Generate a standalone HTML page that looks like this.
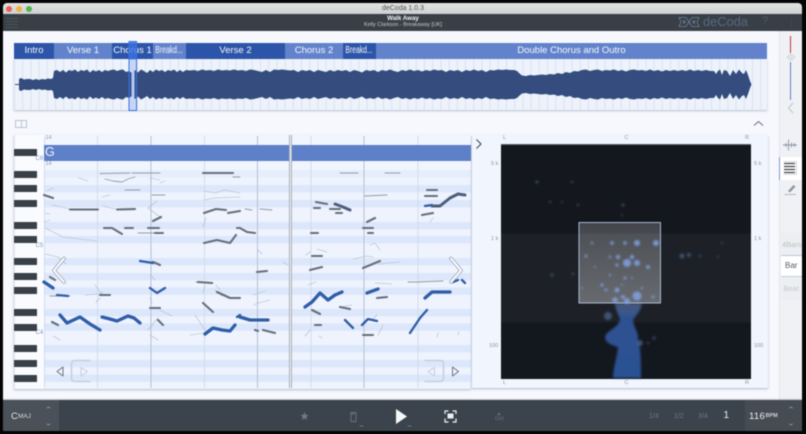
<!DOCTYPE html>
<html><head><meta charset="utf-8">
<style>
html,body{margin:0;padding:0;background:#000;width:806px;height:434px;overflow:hidden}
*{box-sizing:border-box}
#w{position:absolute;left:0;top:0;width:806px;height:434px;overflow:hidden;filter:blur(.55px);font-family:"Liberation Sans",sans-serif;background:#050505}
#w div,#w svg{position:absolute}
.s{top:42.5px;height:16.5px;color:#f4f7fd;font-size:9.5px;line-height:16.5px;text-align:center;white-space:nowrap}
.d{background:#2c54a8}.l{background:#6283cc}
.k{left:14px;width:22.5px;background:#3a4048;height:7px;border-radius:.5px}
.t{white-space:nowrap;line-height:1}
.lab{color:#8995aa;font-size:5.5px;white-space:nowrap;line-height:1}
.b{display:inline-block;transform:scaleX(.68);transform-origin:center;margin:0 -8px;font-size:10px}
</style></head><body>
<div id="w">
<!-- window -->
<div style="left:3px;top:3px;width:799px;height:11px;background:linear-gradient(#e4e4e4,#cfcfcf);border-radius:4px 4px 0 0"></div>
<div style="left:6px;top:5.8px;width:6px;height:6px;border-radius:50%;background:#ec5f58"></div>
<div style="left:16px;top:5.8px;width:6px;height:6px;border-radius:50%;background:#eeb340"></div>
<div style="left:26px;top:5.8px;width:6px;height:6px;border-radius:50%;background:#4fb84d"></div>
<div class="t" style="left:303px;width:200px;top:5px;text-align:center;font-size:7px;color:#555">deCoda 1.0.3</div>
<!-- header -->
<div style="left:3px;top:14px;width:799px;height:17px;background:#383f46"></div>
<div style="left:6px;top:17.5px;width:12px;height:1px;background:#4b535b;box-shadow:0 3px 0 #4b535b,0 6px 0 #4b535b,0 9px 0 #4b535b"></div>
<div class="t" style="left:303px;width:200px;top:16px;text-align:center;font-size:6.2px;font-weight:bold;color:#f0f2f4">Walk Away</div>
<div class="t" style="left:303px;width:200px;top:23px;text-align:center;font-size:5.4px;color:#c3c9cf">Kelly Clarkson - Breakaway [UK]</div>
<svg style="left:678px;top:16px" width="22" height="12" viewBox="0 0 22 12" fill="none" stroke="#6f819d" stroke-width=".8"><path d="M1 1.5H8L11 6L8 10.5H1L3 6Z"/><path d="M21 1.5H14L11 6L14 10.5H21L19 6Z"/><path d="M5.5 4.5V7.5L7.5 6Z M16.5 4.5V7.5L14.5 6Z"/></svg>
<div class="t" style="left:703px;top:16px;font-size:12.8px;color:#586981">deCoda</div>
<div class="t" style="left:762px;top:16px;font-size:11px;color:#4d5a6a">?</div>
<div style="left:790.5px;top:18.5px;width:1px;height:1.5px;background:#4d5a6a;box-shadow:0 3px 0 #4d5a6a,0 6px 0 #4d5a6a"></div>
<!-- content -->
<div style="left:3px;top:31px;width:799px;height:369px;background:#f6f8fd"></div>
<!-- sections -->
<div style="left:14px;top:59px;width:753px;height:51px;background:#edf2fb;box-shadow:0 1px 2px rgba(90,105,135,.4)"></div>
<svg style="left:14px;top:59px" width="753" height="51"><defs><pattern id="tk" width="8.2" height="51" patternUnits="userSpaceOnUse"><rect width="1" height="51" fill="#dbe3f2"/></pattern></defs><rect width="753" height="51" fill="url(#tk)"/></svg>
<div class="s d" style="left:14px;width:40px">Intro</div>
<div class="s l" style="left:54px;width:58px">Verse 1</div>
<div class="s d" style="left:112px;width:41px">Chorus 1</div>
<div class="s l" style="left:153px;width:33px"><span class="b">Breakd...</span></div>
<div class="s d" style="left:186px;width:99px">Verse 2</div>
<div class="s l" style="left:285px;width:58px">Chorus 2</div>
<div class="s d" style="left:343px;width:33px"><span class="b">Breakd...</span></div>
<div class="s l" style="left:376px;width:391px">Double Chorus and Outro</div>
<!-- waveform -->
<svg style="left:0;top:0" width="806" height="434">
<defs><g id="wf"><polygon points="15,84.5 15,84 19,84 19,79 21,78 24,79.5 27,79 30,79 33,80 36,79 39,80 42,79 45,79.5 48,78.5 51,79 53,78 54,71 57,70 60,72 63,70 66,72.5 69,70 72,71 75,69.5 78,72 81,70 84,71 87,69.5 90,72.5 93,70 96,71.5 99,70 102,72 105,70 108,71 111,70 114,69.5 117,71 120,70 123,69.5 126,72 129,71 132,73 135,70 138,72.5 141,69.5 144,71 147,73 150,70 153,72 156,69.5 159,71 162,70 165,72 168,70 171,71 174,69.5 177,72 180,70 183,72 186,70 190,70.5 194,70 198,71 202,69.5 206,70.5 210,70 214,71 218,69.5 222,70.5 226,70 230,70.5 234,69.5 238,70.5 242,70 246,71 250,69.5 254,70 258,71 262,72 266,70 270,72 274,69.5 278,70 282,69.5 286,70 290,70.5 294,70 298,72 302,70 306,71 310,70 314,72 318,70 322,71 326,72 330,70 334,71.5 338,70 342,71 346,70 350,72 354,70 358,71 362,72.5 366,70 370,71 374,70 378,72 382,70 386,71 390,69.5 394,71 398,72 402,70 406,71 410,69.5 414,71 418,70 422,71.5 426,70 430,71 434,69.5 438,70.5 442,70 446,72 450,70 454,71 458,70 462,72 466,70 470,71 474,69.5 478,71 482,70 486,72 490,70 494,70.5 498,69.5 502,70 506,69.5 510,70 514,70 517,71 519,73 522,75.5 526,76 530,75 534,75.5 538,75 542,74.5 546,75 550,74 554,74.5 558,73 562,74 566,72 570,73 574,71 578,71.5 582,70 586,69.5 590,71 594,70 598,69.5 602,71 606,70 610,70.5 614,69.5 618,71 622,70 626,71.5 630,70 634,69.5 638,70.5 642,70 646,71 650,69.5 654,71 658,70 662,71.5 666,70 670,71 674,70 678,71 682,70 686,71 690,69.5 694,71 698,70 702,71 706,70 710,71 714,71 716,74 718,71 720,69.5 722,75 724,70 727,71 730,76 733,70 736,74 739,69.5 742,73 744,74 746,70 748,75 750,81 751.5,84.5"/></g></defs>
<use href="#wf" fill="#344c7e"/>
<use href="#wf" fill="#344c7e" transform="translate(0,169) scale(1,-1)"/>
<rect x="131.5" y="60" width="3" height="50" fill="#e6eefc" opacity=".9"/>
<rect x="129" y="41.5" width="7.5" height="18" fill="#3b72e0" fill-opacity=".75"/>
<rect x="129" y="41.5" width="7.5" height="69" fill="#3b72e0" fill-opacity=".2" stroke="#3b72e0" stroke-width="1"/>
</svg>
<!-- collapse icons -->
<div style="left:15px;top:119.5px;width:11.5px;height:8px;border:1px solid #b9c3d4"><div style="left:5px;top:0;width:1px;height:6px;background:#b9c3d4"></div></div>
<svg style="left:752px;top:119px" width="13" height="8" fill="none" stroke="#666f7b" stroke-width="1"><path d="M2 6.5L6.5 2.5L11 6.5"/></svg>
<!-- piano panel -->
<div style="left:14px;top:135px;width:457px;height:253.5px;background:#f1f5fd;box-shadow:0 1px 2px rgba(90,105,135,.45)"></div>
<div style="left:14px;top:135px;width:30px;height:253.5px;background:#fafbfe;border-left:1px solid #e3e7ef"></div>
<div style="left:44px;top:170px;width:427px;height:218px;background:#eef3fd"></div>
<svg style="left:0;top:0" width="806" height="434" fill="#dce7fb">
<rect x="44" y="170" width="427" height="7.5" fill="#e6eefc"/>
<rect x="44" y="185" width="427" height="7.3"/><rect x="44" y="200" width="427" height="7.3"/>
<rect x="44" y="222" width="427" height="7.3"/><rect x="44" y="236" width="427" height="7.3"/>
<rect x="44" y="258" width="427" height="7.3"/><rect x="44" y="273" width="427" height="7.3"/>
<rect x="44" y="287.5" width="427" height="7.3"/><rect x="44" y="309" width="427" height="7.3"/>
<rect x="44" y="323.5" width="427" height="7.3"/><rect x="44" y="345" width="427" height="7.3"/>
<rect x="44" y="360" width="427" height="7.3"/><rect x="44" y="374.5" width="427" height="7.3"/>
<path d="M44.5 136V388M97.5 136V388M204.5 136V388M311 136V388M418 136V388" stroke="#cdd7e8" stroke-width=".8"/>
<path d="M151 136V388M257.5 136V388M364 136V388" stroke="#b3c1d8" stroke-width="1"/>
</svg>
<!-- chord bar -->
<div style="left:44px;top:144.5px;width:427px;height:16px;background:#5e80c8"></div>
<div class="t" style="left:45px;top:146px;font-size:12.5px;color:#f2f5fc">G</div>
<div class="lab" style="left:45.5px;top:135.5px;color:#8d98ac">14</div>
<div class="lab" style="left:45.5px;top:162px;color:#8d98ac">14</div>
<div class="lab" style="left:35.5px;top:155.5px;color:#7f98cb;font-size:6px">C6</div>
<div class="lab" style="left:35.5px;top:243px;color:#7f98cb;font-size:6px">C5</div>
<div class="lab" style="left:35.5px;top:330px;color:#7f98cb;font-size:6px">C4</div>
<!-- black keys -->
<div class="k" style="top:148.8px"></div><div class="k" style="top:170.8px"></div><div class="k" style="top:185.3px"></div><div class="k" style="top:199.8px"></div><div class="k" style="top:221.8px"></div><div class="k" style="top:236px"></div><div class="k" style="top:258.3px"></div><div class="k" style="top:272.8px"></div><div class="k" style="top:287.3px"></div><div class="k" style="top:309px"></div><div class="k" style="top:323.5px"></div><div class="k" style="top:345.3px"></div><div class="k" style="top:360px"></div><div class="k" style="top:374.5px"></div>
<!-- notes -->
<svg style="left:0;top:0" width="806" height="434" fill="none" stroke-linecap="round" stroke-linejoin="round">
<g stroke="#aeb8c6" stroke-width=".6">
<path d="M78 177.5L88 181M47 191L53 188M102 197L110 195M52 205L70 209M103 206L115 209M148 208L157 201M148 208L160 217M204 191L215 193L225 190L240 193M204 200L215 198L240 197M45 228L63 237L97 241M45 254L58 257L66 264M45 213L50 214M44 222L50 220M203 227L206 218M160 183L165 181M150 178L160 180M85 295L100 294L103 292M95 285L103 296M96 302L100 298M150 298L152 303M150 275L155 280M205 285L203 293M215 290L222 296M148 330L158 318M150 335L158 340M190 335L205 333M195 315L205 330M160 310L172 316M60 340L53 336M216 285L220 290M317 249L327 252M353 259L367 256L373 257M370 245L375 243L380 250M430 222L433 218M378 264L400 262M283 262L288 265M258 250L262 254M306 255L310 252M270 300L258 303L254 305M253 295L265 291M375 283L392 284M308 285L316 282M340 307L352 305M377 315L372 320M310 330L305 336M319 336L322 338M383 325L378 335M437 337L438 333M458 335L459 332"/>
</g>
<g stroke="#939ba7" stroke-width=".9">
<path d="M100 173.5L130 173M132 173L160 173M105 179L113 181L122 182L128 179L135 177M125 190L140 190M152 195L165 195M138 233L163 233M233 177L240 177M365 196L387 195M245 209L252 210M260 209L272 210M416 282L443 281M50 296L70 296M196 282L213 283M340 173L358 173M385 173L400 173M408 282L420 282"/>
</g>
<g stroke="#666f7c" stroke-width="2.1">
<path d="M70 209.5L98 209.5M117 209.5L135 209M44 195L53 198M104 228L112 228L122 234M125 228L133 228M148 228L159 228M153 221L161 217M155 233L163 233M204 213L216 209L226 210M228 213L240 211M204 243L217 240L230 243L236 235M237 228L240 228M203 173L233 173M316 202L327 204M314 208L320 208M330 209L340 209M336 213L342 213M427 190L437 190M425 196L437 196M422 215L433 213M240 228L247 232L255 233M363 228L373 228M368 233L373 233M367 222L375 218M311 233L318 233M312 256L322 256M198 282L212 283M217 292L230 298L240 298M150 308L160 308M203 303L213 312M158 320L163 325M100 295L110 295M52 322L58 325M257 272L267 271M310 270L322 267M363 268L380 261M312 310L320 314M315 325L321 325M340 307L350 309M377 298L387 297M263 330L275 333M255 330L258 331M363 335L373 335M50 277L55 280M160 265L153 262"/>
</g>
<g stroke="#2f5da8">
<path stroke-width="3.3" d="M60 315L67 323L80 317L90 324L100 330M102 317L110 319L117 321L128 316L134 318L140 323M305 307L312 302L320 293L328 300L335 295L342 292M240 317L250 320L268 320M367 293L378 289M425 298L432 292L440 292L450 292M205 334L213 328L222 330L230 331L235 325M44 282L53 288"/>
<path stroke-width="2.3" d="M140 261L153 263M150 288L157 293L165 288M345 320L353 328M362 325L368 319L377 321M410 333L420 318L427 310M453 282L458 280M462 280L465 283M57 295L68 296M237 317L240 315M425 206L432 205"/>
</g>
<g stroke="#4d5f7e" stroke-width="3"><path d="M432 206L440 206L450 198L458 194L465 195M335 204L343 207L350 210"/></g>
<!-- chevrons -->
<g stroke="#9aa6b8" stroke-width="3.6"><path d="M64 258.5L54 270.5L64 282"/><path d="M451 258.5L461 270.5L451 282"/></g>
<g stroke="#fff" stroke-width="2"><path d="M64 258.5L54 270.5L64 282"/><path d="M451 258.5L461 270.5L451 282"/></g>
<!-- transport buttons -->
<path d="M63 367V376L57 371.5Z" stroke="#6b7586" stroke-width="1"/>
<path d="M90 360.5H75Q71.5 360.5 71.5 364V378Q71.5 381.5 75 381.5H90" stroke="#c5cedf" stroke-width="1.5"/>
<path d="M81 367.5V376L87.5 371.5Z" stroke="#c5cedf" stroke-width="1"/>
<path d="M425 360.5H440Q443.5 360.5 443.5 364V378Q443.5 381.5 440 381.5H425" stroke="#c5cedf" stroke-width="1.5"/>
<path d="M434.5 367.5V376L428 371.5Z" stroke="#c5cedf" stroke-width="1"/>
<path d="M452.5 367V376L458.5 371.5Z" stroke="#6b7586" stroke-width="1"/>
</svg>
<!-- playhead -->
<div style="left:289px;top:135px;width:3.4px;height:253px;background:#f3f5f9;border-left:1px solid #a7aeb9;border-right:1px solid #a7aeb9"></div>
<!-- spectrum panel -->
<div style="left:472px;top:135px;width:296px;height:253px;background:#f1f5fd;box-shadow:0 1px 2px rgba(90,105,135,.45)"></div>
<svg style="left:475px;top:138px" width="8" height="12" fill="none" stroke="#444c58" stroke-width="1.1"><path d="M1.5 1.5L6 6L1.5 10.5"/></svg>
<div style="left:500.5px;top:143.5px;width:250.5px;height:235px;background:linear-gradient(#14171d 0,#14171d 88.5px,#1d2127 88.5px,#1d2127 177.5px,#13171e 177.5px,#13171e 100%);border-top:1px solid #5b6473"></div>
<svg style="left:0;top:0" width="806" height="434">
<defs><linearGradient id="bl" x1="0" y1="0" x2="0" y2="1"><stop offset="0" stop-color="#5f7cb0" stop-opacity=".55"/><stop offset=".2" stop-color="#2e5191"/><stop offset="1" stop-color="#2c5193"/></linearGradient>
<linearGradient id="bx" x1="0" y1="0" x2="0" y2="1"><stop offset="0" stop-color="#fff" stop-opacity=".2"/><stop offset="1" stop-color="#fff" stop-opacity=".33"/></linearGradient>
<filter id="sb"><feGaussianBlur stdDeviation="1"/></filter></defs>
<path d="M615 303H642C641 311 636 315 633 320C633 326 638 331 638 337C638 343 640 345 640 349C641 360 641 370 641 378H613C613 368 617 358 618 347C610 345 605 342 605 337C606 331 618 328 620 320C619 314 615 310 615 303Z" fill="url(#bl)" filter="url(#sb)"/>
<rect x="579" y="222.5" width="81.5" height="80.5" fill="url(#bx)" stroke="#a9b8d6" stroke-width="1"/>
<g filter="url(#sb)" fill="#7f9fdf" opacity=".9">
<circle cx="637" cy="243" r="3"/><circle cx="656" cy="243" r="3"/><circle cx="625" cy="243" r="1.8"/><circle cx="612" cy="243" r="1.8"/><circle cx="592" cy="243" r="1.3"/><circle cx="618" cy="257" r="2.2"/><circle cx="632" cy="257" r="2.2"/><circle cx="627" cy="263" r="4"/><circle cx="637" cy="263" r="3"/><circle cx="610" cy="257" r="1.3"/><circle cx="586" cy="256" r="1.5"/><circle cx="648" cy="267" r="2"/><circle cx="617" cy="265" r="1.6"/><circle cx="602" cy="285" r="1.6"/><circle cx="606" cy="290" r="1.5"/><circle cx="617" cy="290" r="2.5"/><circle cx="637" cy="296" r="4.5"/><circle cx="623" cy="297" r="2"/><circle cx="615" cy="300" r="2.8"/><circle cx="627" cy="301" r="3"/><circle cx="582" cy="288" r="1"/><circle cx="595" cy="267" r="1"/><circle cx="625" cy="278" r="1.5"/><circle cx="632" cy="278" r="1"/><circle cx="610" cy="275" r="1.2"/><circle cx="653" cy="297" r="1.5"/><circle cx="642" cy="288" r="1.2"/><circle cx="622" cy="285" r="1"/></g>
<g filter="url(#sb)" fill="#5e79ad" opacity=".55"><circle cx="682" cy="256" r="2.5"/><circle cx="689" cy="255" r="2"/><circle cx="700" cy="256" r="1.2"/><circle cx="718" cy="257" r="1"/><circle cx="722" cy="243" r="1"/><circle cx="608" cy="316" r="4"/><circle cx="640" cy="343" r="3"/><circle cx="654" cy="338" r="1.5"/><circle cx="648" cy="343" r="1.2"/><circle cx="552" cy="275" r="1.5"/><circle cx="573" cy="274" r="1.2"/><circle cx="537" cy="182" r="1.5"/><circle cx="572" cy="182" r="1.2"/><circle cx="550" cy="202" r="1.2"/><circle cx="562" cy="202" r="1"/><circle cx="578" cy="205" r="1.2"/><circle cx="623" cy="205" r="1.5"/><circle cx="622" cy="215" r="1"/></g>
</svg>
<div class="lab" style="left:503px;top:135.5px">L</div><div class="lab" style="left:624.5px;top:135.5px">C</div><div class="lab" style="left:745px;top:135.5px">R</div>
<div class="lab" style="left:503px;top:380.5px">L</div><div class="lab" style="left:624.5px;top:380.5px">C</div><div class="lab" style="left:745px;top:380.5px">R</div>
<div class="lab" style="left:491px;top:162px">5 k</div><div class="lab" style="left:754px;top:162px">5 k</div>
<div class="lab" style="left:491px;top:237px">1 k</div><div class="lab" style="left:754px;top:237px">1 k</div>
<div class="lab" style="left:489px;top:344px">100</div><div class="lab" style="left:754px;top:344px">100</div>
<!-- sidebar -->
<div style="left:779px;top:31px;width:23px;height:369px;background:#eff1f5;border-left:1px solid #e3e6ec"></div>
<div style="left:790px;top:36px;width:1.2px;height:17px;background:#c0353f"></div>
<div style="left:790px;top:62px;width:1.2px;height:38px;background:#5f7fc6"></div>
<svg style="left:783px;top:52px" width="16" height="62" fill="none"><path d="M4 5L7 2.5H9L12 5L9 8H7Z" fill="#e0e3e8" stroke="#d0d4da" stroke-width=".7"/><path d="M10 51L5.5 56L10 61" stroke="#c3c8d0" stroke-width="1.2"/></svg>
<svg style="left:782px;top:138px" width="16" height="14" fill="none" stroke="#8a97a6" stroke-width=".9"><path d="M1 7H15M4 5V9M6.5 1.5V12.5M9.5 4.5V9.5M12.5 5V9"/></svg>
<div style="left:779px;top:157px;width:23px;height:22.5px;background:#fff;border-left:1.2px solid #7f97d3"></div>
<svg style="left:782px;top:160px" width="16" height="16" fill="none"><path d="M1.5 1.5H14.5V14.5H1.5" stroke="#b3b9c2" stroke-width=".6"/><path d="M2 3.5H13M2 6.5H13M2 9.5H13M2 12.5H13" stroke="#3c4249" stroke-width="1.2"/></svg>
<svg style="left:782px;top:182px" width="16" height="14" fill="none"><path d="M6 9L11.5 3L13.5 4.5L8 10.5Z" fill="#8f98a4"/><path d="M2.5 12.5H14" stroke="#a9b0bb" stroke-width=".9"/></svg>
<div style="left:781px;top:233px;width:21px;height:67px;background:#eceef2;border-radius:2px"></div>
<div class="t" style="left:782px;top:240.5px;font-size:7.5px;color:#b9bec6">4Bars</div>
<div style="left:781px;top:255px;width:21px;height:22px;background:#fff;border-top:1px solid #b8c6de;border-bottom:1px solid #b7d3dd"></div>
<div class="t" style="left:785px;top:262px;font-size:8px;color:#555c66">Bar</div>
<div class="t" style="left:783.5px;top:285px;font-size:7.5px;color:#c3c7ce">Beat</div>
<!-- bottom bar -->
<div style="left:3px;top:400px;width:799px;height:31px;background:#3b444d;box-shadow:0 -1px 1px rgba(70,80,95,.3)"></div>
<div style="left:3px;top:400px;width:56px;height:31px;background:#4a5158"></div>
<div style="left:745px;top:400px;width:57px;height:31px;background:#454c54"></div>
<div class="t" style="left:11px;top:411.5px;font-size:9.5px;color:#e6e9ec">C</div>
<div class="t" style="left:18px;top:413.5px;font-size:6.5px;color:#d5d9de">MAJ</div>
<svg style="left:0;top:400px" width="806" height="31" fill="none" stroke-linecap="round">
<path d="M47 8L48.5 7L50 8M47 24L48.5 25L50 24M789.5 8L791 7L792.5 8M789.5 24L791 25L792.5 24" stroke="#8d959d" stroke-width=".8"/>
<path d="M304.5 12L305.7 15H308.5L306.3 17L307 20L304.5 18.3L302 20L302.7 17L300.5 15H303.3Z" fill="#727b84"/>
<path d="M351 12.5H356V21.5H351Z M352 14H354" stroke="#6d767f" stroke-width=".9"/>
<path d="M360 26H363M408 26H411" stroke="#7e868e" stroke-width=".8"/>
<path d="M396 9V24L407 16.5Z" fill="#f6f7f8"/>
<path d="M445 13.5V11H448M453 11H456V13.5M456 19V22H453M448 22H445V19" stroke="#eef0f2" stroke-width="1.2"/>
<rect x="447.5" y="13.5" width="6" height="5" fill="#eef0f2"/>
<path d="M497.5 15L499 12.5L500.5 15Z" fill="#6f7880"/>
</svg>
<div class="t" style="left:495px;top:417px;font-size:5.5px;color:#6f7880">Oct</div>
<div class="t" style="left:649px;top:412.5px;font-size:7px;color:#6e7780">1/4</div>
<div class="t" style="left:674px;top:412.5px;font-size:7px;color:#6e7780">1/2</div>
<div class="t" style="left:698px;top:412.5px;font-size:7px;color:#6e7780">3/4</div>
<div class="t" style="left:723.5px;top:411px;font-size:10px;color:#f0f2f4">1</div>
<div class="t" style="left:749px;top:411.5px;font-size:9.5px;color:#eef0f2;letter-spacing:.3px">116</div>
<div class="t" style="left:765.5px;top:414px;font-size:5.5px;font-weight:bold;color:#cfd3d8">BPM</div>
</div>
</body></html>
